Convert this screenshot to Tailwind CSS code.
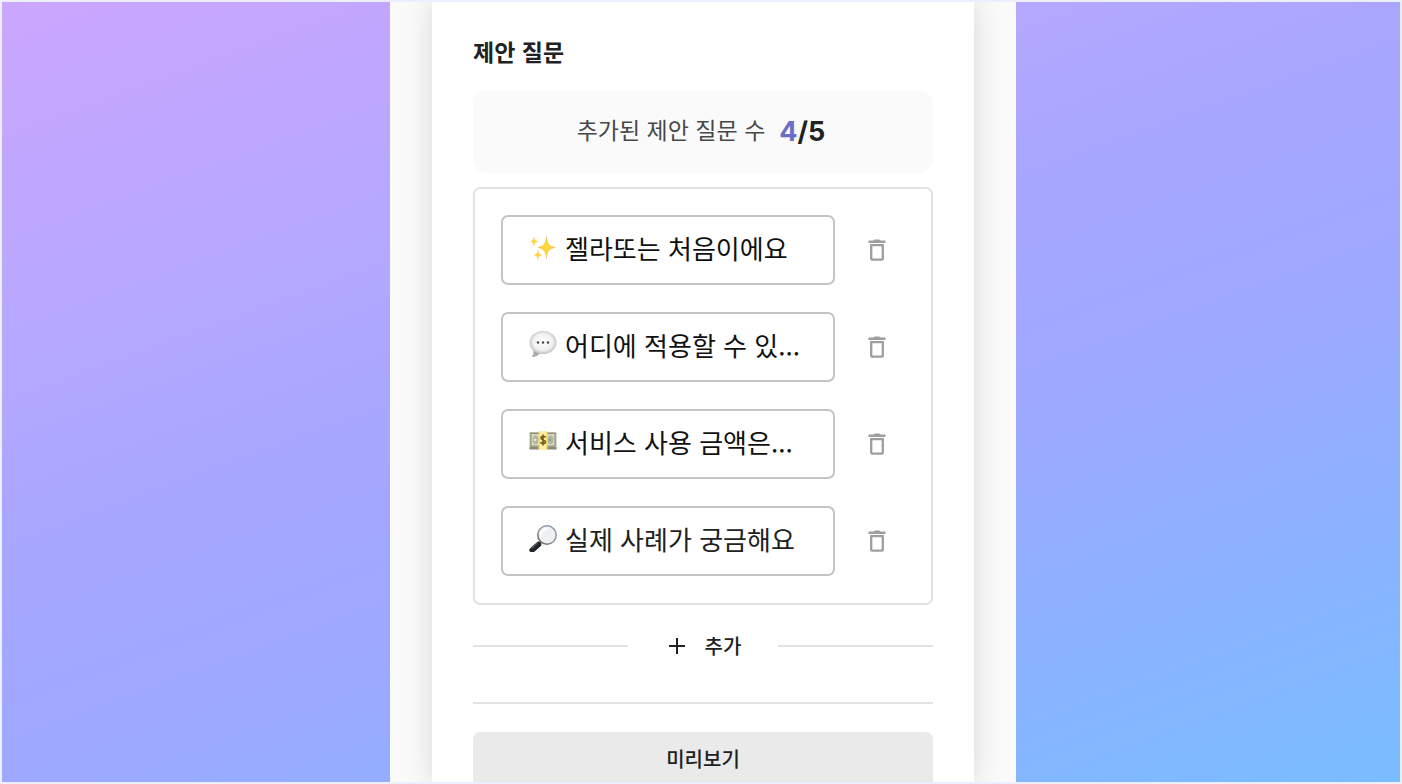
<!DOCTYPE html>
<html lang="ko">
<head>
    <meta charset="UTF-8">
    <meta name="viewport" content="width=device-width, initial-scale=1.0">
    <title>제안 질문</title>
    <script src="https://cdn.jsdelivr.net/npm/@tailwindcss/browser@4"></script>
</head>
<body class="font-['Noto_Sans_CJK_KR','Noto_Sans',sans-serif] text-[#202122]">
    <!-- Shared icons -->
    <svg class="hidden">
        <symbol id="trash" viewBox="0 0 18 22">
            <path d="M.5 1.600h5l1.200-1.200h4.600l1.200 1.200h5v2.500H.5z" fill="#9e9e9e"/>
            <path d="M3.200 6.100h11.600v13.600a1 1 0 0 1-1 1H4.200a1 1 0 0 1-1-1z" fill="none" stroke="#9e9e9e" stroke-width="2.300"/>
        </symbol>
    </svg>

    <div class="flex h-screen justify-center overflow-hidden border-2 border-[#eceffe] bg-[linear-gradient(160deg,#cba6ff_0%,#b4a8ff_30%,#a9a6ff_40%,#9ea8ff_60%,#93adff_71%,#79bdff_100%)] pl-1">
        <main class="w-full max-w-[626px] bg-[#fafafa] px-[42px]">
            <div class="h-full bg-white px-[41px] pt-[31px] shadow-[0_0_28px_rgba(0,0,0,0.14)]">
                <h1 class="text-[23px] leading-9 font-bold">제안 질문</h1>

                <!-- Count -->
                <p class="mt-[21px] flex h-[83px] items-center justify-center gap-[14px] rounded-[14px] bg-[#fafafa] pr-1">
                    <span class="pb-1.5 text-[23px] leading-9 text-[#484848]">추가된 제안 질문 수</span>
                    <span class="font-[Inter,sans-serif] text-[27px] leading-9 font-bold"><span class="text-[#686fc4]">4</span>/5</span>
                </p>

                <!-- Question list -->
                <ul class="mt-[14px] flex flex-col gap-[27px] rounded-[7px] border-2 border-[#e2e2e2] px-[26px] pt-[26px] pb-[27px]">
                    <li class="flex items-center">
                        <label class="flex h-[70px] min-w-0 flex-1 items-center gap-2 rounded-[7px] border-2 border-[#c4c4c4] pb-1 pl-[26px]">
                            <svg class="mb-0.5 size-7 shrink-0" viewBox="0 0 28 28">
                                <defs>
                                    <radialGradient id="star"><stop offset="0" stop-color="#ffdf35"/><stop offset=".5" stop-color="#ffd044"/><stop offset="1" stop-color="#f2a56b"/></radialGradient>
                                </defs>
                                <g fill="url(#star)">
                                    <path d="M17.500 2C18.500 10 19.500 13 27 14.500C19.500 16 18.500 19 17.500 27C16.500 19 15.500 16 8 14.500C15.500 13 16.500 10 17.500 2z"/>
                                    <path d="M5 3C5.500 6.500 6 7.800 9.500 8.500C6 9.200 5.500 10.500 5 14C4.500 10.500 4 9.200 1 8.500C4 7.800 4.500 6.500 5 3z"/>
                                    <path d="M9 16C9.500 20 10 21 13 22C10 23 9.500 24 9 28C8.500 24 8 23 5 22C8 21 8.500 20 9 16z"/>
                                </g>
                            </svg>
                            <input type="text" aria-label="제안 질문 1" value="젤라또는 처음이에요" class="h-10 w-full min-w-0 text-[26px] leading-10 text-[#111] outline-none">
                        </label>
                        <button type="button" aria-label="삭제" class="mr-[14px] ml-7 grid w-7 place-items-center"><svg class="h-[22px] w-[18px]"><use href="#trash"/></svg></button>
                    </li>
                    <li class="flex items-center">
                        <label class="flex h-[70px] min-w-0 flex-1 items-center gap-2 rounded-[7px] border-2 border-[#c4c4c4] pb-1 pl-[26px]">
                            <svg class="mb-0.5 size-7 shrink-0" viewBox="0 0 28 28">
                                <defs>
                                    <radialGradient id="bubble" cx=".5" cy=".48" r=".55"><stop offset="0" stop-color="#fff"/><stop offset=".65" stop-color="#f1f1f1"/><stop offset="1" stop-color="#b9b9b9"/></radialGradient>
                                </defs>
                                <path d="M4 20Q5.500 24 2.500 27Q8 27 12 22.500z" fill="#a8a8a8"/>
                                <ellipse cx="14" cy="12.500" rx="13.500" ry="11.500" fill="url(#bubble)"/>
                                <g fill="#444"><circle cx="9" cy="12.500" r="1.200"/><circle cx="14" cy="12.500" r="1.200"/><circle cx="19" cy="12.500" r="1.200"/></g>
                            </svg>
                            <input type="text" aria-label="제안 질문 2" value="어디에 적용할 수 있..." class="h-10 w-full min-w-0 text-[26px] leading-10 text-[#111] outline-none">
                        </label>
                        <button type="button" aria-label="삭제" class="mr-[14px] ml-7 grid w-7 place-items-center"><svg class="h-[22px] w-[18px]"><use href="#trash"/></svg></button>
                    </li>
                    <li class="flex items-center">
                        <label class="flex h-[70px] min-w-0 flex-1 items-center gap-2 rounded-[7px] border-2 border-[#c4c4c4] pb-1 pl-[26px]">
                            <svg class="mb-0.5 size-7 shrink-0" viewBox="0 0 28 28">
                                <path d="M.5 5h27v17H.5z" fill="#b9baa4"/>
                                <path d="M.5 20h27v2.500H.5z" fill="#898a78"/>
                                <path d="M2 6.500h24v12.500H2z" fill="#dcddc6" stroke="#8a8d79"/>
                                <ellipse cx="6.500" cy="12.700" rx="3" ry="4.500" fill="#b1b7a0"/>
                                <ellipse cx="21.500" cy="12.700" rx="3" ry="4.500" fill="#b1b7a0"/>
                                <circle cx="6" cy="12.700" r="1.300" fill="#e8e9da"/>
                                <circle cx="21" cy="12.700" r="1.300" fill="#6fae91"/>
                                <path d="M9.500 4.500h9V23h-9z" fill="#f8d663"/>
                                <path d="M10.800 4.500h6.400V23h-6.400z" fill="#fff0a8"/>
                                <path d="M16.500 10.500C16 9 12 8.800 12 11S16.500 12.700 16.500 15S12 17 11.500 15M14 7.500v11" fill="none" stroke="#7a5a18" stroke-width="1.600"/>
                            </svg>
                            <input type="text" aria-label="제안 질문 3" value="서비스 사용 금액은..." class="h-10 w-full min-w-0 text-[26px] leading-10 text-[#111] outline-none">
                        </label>
                        <button type="button" aria-label="삭제" class="mr-[14px] ml-7 grid w-7 place-items-center"><svg class="h-[22px] w-[18px]"><use href="#trash"/></svg></button>
                    </li>
                    <li class="flex items-center">
                        <label class="flex h-[70px] min-w-0 flex-1 items-center gap-2 rounded-[7px] border-2 border-[#c4c4c4] pb-1 pl-[26px]">
                            <svg class="mb-0.5 size-7 shrink-0" viewBox="0 0 28 28">
                                <defs>
                                    <linearGradient id="rim" x1="0" x2="1" y1="1" y2="0"><stop offset="0" stop-color="#555"/><stop offset=".5" stop-color="#999"/><stop offset="1" stop-color="#7894b8"/></linearGradient>
                                </defs>
                                <path d="M12.500 17.500L9 21" stroke="#777" stroke-width="2.500"/>
                                <path d="M9.500 20.500L3.200 26" stroke="#202329" stroke-width="5.500" stroke-linecap="round"/>
                                <path d="M9 18.800L2.500 24.600" stroke="#6b7078" stroke-width="1"/>
                                <circle cx="18" cy="11" r="9.200" fill="#eef0f3" stroke="url(#rim)" stroke-width="1.500"/>
                                <path d="M12 11a6 6 0 0 1 6-6" fill="none" stroke="#fff" stroke-width="2"/>
                            </svg>
                            <input type="text" aria-label="제안 질문 4" value="실제 사례가 궁금해요" class="h-10 w-full min-w-0 text-[26px] leading-10 outline-none">
                        </label>
                        <button type="button" aria-label="삭제" class="mr-[14px] ml-7 grid w-7 place-items-center"><svg class="h-[22px] w-[18px]"><use href="#trash"/></svg></button>
                    </li>
                </ul>

                <!-- Add -->
                <div class="mt-[23px] flex h-9 items-center">
                    <span class="h-[2px] flex-1 bg-[#e2e2e2]"></span>
                    <button type="button" class="flex w-[150px] items-center justify-center gap-5 pl-1 text-[20px] leading-9 font-medium">
                        <svg class="size-4" viewBox="0 0 16 16"><path d="M8 0v16M0 8h16" stroke="#202122" stroke-width="2"/></svg>
                        추가
                    </button>
                    <span class="h-[2px] flex-1 bg-[#e2e2e2]"></span>
                </div>

                <hr class="mt-[38px] border-t-2 border-[#e2e2e2]">

                <button type="button" class="mt-7 h-14 w-full rounded-[7px] bg-[#eaeaea] pb-0.5 text-[20px] leading-9 font-medium">미리보기</button>
            </div>
        </main>
    </div>
</body>
</html>
